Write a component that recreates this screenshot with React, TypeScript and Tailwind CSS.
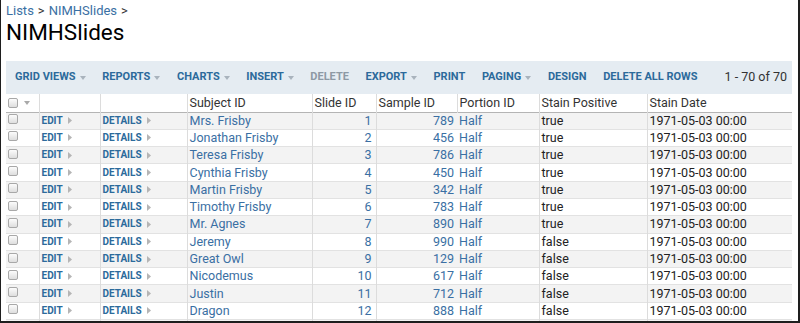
import React from 'react';

type Row = { subject: string; slide: number; sample: number; stain: string };

const rows: Row[] = [
  { subject: 'Mrs. Frisby', slide: 1, sample: 789, stain: 'true' },
  { subject: 'Jonathan Frisby', slide: 2, sample: 456, stain: 'true' },
  { subject: 'Teresa Frisby', slide: 3, sample: 786, stain: 'true' },
  { subject: 'Cynthia Frisby', slide: 4, sample: 450, stain: 'true' },
  { subject: 'Martin Frisby', slide: 5, sample: 342, stain: 'true' },
  { subject: 'Timothy Frisby', slide: 6, sample: 783, stain: 'true' },
  { subject: 'Mr. Agnes', slide: 7, sample: 890, stain: 'true' },
  { subject: 'Jeremy', slide: 8, sample: 990, stain: 'false' },
  { subject: 'Great Owl', slide: 9, sample: 129, stain: 'false' },
  { subject: 'Nicodemus', slide: 10, sample: 617, stain: 'false' },
  { subject: 'Justin', slide: 11, sample: 712, stain: 'false' },
  { subject: 'Dragon', slide: 12, sample: 888, stain: 'false' },
];

function Caret() {
  return (
    <svg width="6" height="4" viewBox="0 0 6 4" className="ml-[4px] inline-block shrink-0">
      <path d="M0 0 L6 0 L3 4 Z" fill="#a9b3bd" />
    </svg>
  );
}

function RightCaret() {
  return (
    <svg width="4" height="7" viewBox="0 0 4 7" className="ml-[5px] inline-block shrink-0">
      <path d="M0 0 L4 3.5 L0 7 Z" fill="#b5b5b5" />
    </svg>
  );
}

function Checkbox() {
  return (
    <span className="inline-block w-[10px] h-[10px] rounded-[2px] border border-[#a8a8a8] bg-gradient-to-b from-[#fcfcfc] to-[#dedede]" />
  );
}

function BarButton({ label, menu, disabled }: { label: string; menu?: boolean; disabled?: boolean }) {
  return (
    <span
      className={`flex shrink-0 items-center whitespace-nowrap text-[11px] font-bold ${
        disabled ? 'text-[#8d99a4]' : 'text-[#2c6a9b]'
      }`}
    >
      {label}
      {menu && <Caret />}
    </span>
  );
}

export default function App() {
  const cell = 'border-r border-[#dcdcdc] px-[2px] whitespace-nowrap overflow-hidden leading-[16px] p-0';
  return (
    <div className="w-[800px] h-[323px] overflow-hidden bg-white border-l border-r-2 border-b-2 border-[#1e1e1e] pl-[5px] font-['Roboto',sans-serif] text-[#222]">
      <div className="pt-[3px] text-[13px] leading-[16px]">
        <span className="text-[#3a6fa3]">Lists</span>
        <span className="text-[#333] mx-[4px]">&gt;</span>
        <span className="text-[#3a6fa3]">NIMHSlides</span>
        <span className="text-[#333] ml-[4px]">&gt;</span>
      </div>
      <h1 className="text-[22.5px] leading-[26px] text-black">NIMHSlides</h1>

      <div className="mt-[16px] w-[786px] h-[33px] bg-[#e5ecf2] flex items-center pl-[9px] pr-[5px] gap-[16.6px] overflow-hidden">
        <BarButton label="GRID VIEWS" menu />
        <BarButton label="REPORTS" menu />
        <BarButton label="CHARTS" menu />
        <BarButton label="INSERT" menu />
        <BarButton label="DELETE" disabled />
        <BarButton label="EXPORT" menu />
        <BarButton label="PRINT" />
        <BarButton label="PAGING" menu />
        <BarButton label="DESIGN" />
        <BarButton label="DELETE ALL ROWS" />
        <span className="ml-auto shrink-0 whitespace-nowrap text-[12.5px] text-[#333]">1 - 70 of 70</span>
      </div>

      <table className="w-[786px] table-fixed border-collapse text-[12.5px]">
        <colgroup>
          <col className="w-[33px]" />
          <col className="w-[61px]" />
          <col className="w-[87px]" />
          <col className="w-[125px]" />
          <col className="w-[64px]" />
          <col className="w-[81px]" />
          <col className="w-[82px]" />
          <col className="w-[108px]" />
          <col className="w-[145px]" />
        </colgroup>
        <thead>
          <tr className="h-[18px] border-b border-[#b4b4b4] text-[#333] text-left">
            <th className={`${cell} font-normal`}>
              <span className="flex items-center">
                <Checkbox />
                <svg width="6" height="4" viewBox="0 0 6 4" className="ml-[6px]">
                  <path d="M0 0 L6 0 L3 4 Z" fill="#a9a9a9" />
                </svg>
              </span>
            </th>
            <th className={`${cell} font-normal`}></th>
            <th className={`${cell} font-normal`}></th>
            <th className={`${cell} font-normal`}>Subject ID</th>
            <th className={`${cell} font-normal`}>Slide ID</th>
            <th className={`${cell} font-normal`}>Sample ID</th>
            <th className={`${cell} font-normal`}>Portion ID</th>
            <th className={`${cell} font-normal`}>Stain Positive</th>
            <th className={`${cell} font-normal border-r-0`}>Stain Date</th>
          </tr>
        </thead>
        <tbody>
          {rows.map((r, i) => (
            <tr
              key={r.slide}
              className={`h-[17.3px] border-b border-[#e2e2e2] ${i % 2 === 0 ? 'bg-[#f3f3f3]' : 'bg-white'}`}
            >
              <td className={cell}>
                <span className="flex items-center -mt-[3px]">
                  <Checkbox />
                </span>
              </td>
              <td className={cell}>
                <span className="flex items-center text-[10px] font-bold text-[#2c6a9b]">
                  EDIT
                  <RightCaret />
                </span>
              </td>
              <td className={cell}>
                <span className="flex items-center text-[10px] font-bold text-[#2c6a9b]">
                  DETAILS
                  <RightCaret />
                </span>
              </td>
              <td className={`${cell} text-[#3a6fa3]`}>{r.subject}</td>
              <td className={`${cell} text-right pr-[4px] text-[#3a6fa3]`}>{r.slide}</td>
              <td className="px-[2px] pr-[3px] leading-[16px] text-right text-[#3a6fa3]">{r.sample}</td>
              <td className={`${cell} text-[#3a6fa3]`}>Half</td>
              <td className={`${cell} text-[#222]`}>{r.stain}</td>
              <td className={`${cell} border-r-0 text-[#222]`}>1971-05-03 00:00</td>
            </tr>
          ))}
          <tr className="h-[17.3px] bg-[#f3f3f3]">
            <td className={cell}></td>
            <td className={cell}></td>
            <td className={cell}></td>
            <td className={cell}></td>
            <td className={cell}></td>
            <td className="p-0"></td>
            <td className={cell}></td>
            <td className={cell}></td>
            <td className={`${cell} border-r-0`}></td>
          </tr>
        </tbody>
      </table>
    </div>
  );
}
